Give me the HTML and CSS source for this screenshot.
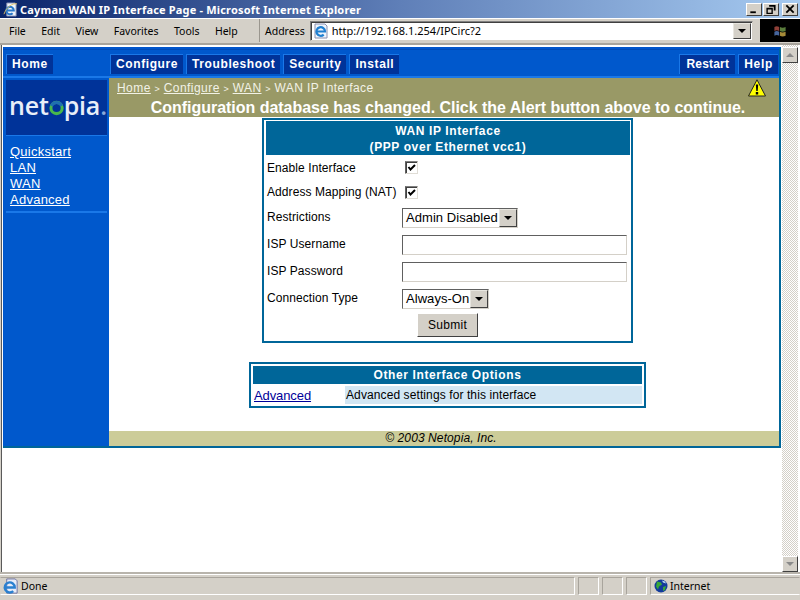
FILE: index.html
```html
<!DOCTYPE html>
<html lang="en">
<head>
<meta charset="utf-8">
<title>Cayman WAN IP Interface Page - Microsoft Internet Explorer</title>
<link rel="stylesheet" href="styles.css">
</head>
<body>
<div class="window">
  <header class="titlebar">
    <svg class="ti" viewBox="0 0 16 16"><path d="M4 1h9l1 1v13H4z" fill="#f0f4fb" stroke="#7c86ac"/><path d="M3.500 9h8a4 4 0 1 0-1.200 3" fill="none" stroke="#2a78c8" stroke-width="2.200"/><path d="M1 13C4 5 10 1 15 2" fill="none" stroke="#e3c060" stroke-width="1"/></svg>
    <span class="title-text">Cayman WAN IP Interface Page - Microsoft Internet Explorer</span>
    <div class="winbtns">
      <span class="winbtn"><svg viewBox="0 0 14 12"><path d="M3 8h6v2H3z"/></svg></span>
      <span class="winbtn"><svg viewBox="0 0 14 12"><path d="M5 1h7v6h-2V3H5zM2 4h7v7H2zM3.500 6v3.500h4V6z" fill-rule="evenodd"/></svg></span>
      <span class="winbtn"><svg viewBox="0 0 14 12"><path d="M3 1.500l8 8M11 1.500l-8 8" stroke="#000" stroke-width="2"/></svg></span>
    </div>
  </header>
  <div class="menubar">
    <nav class="menus">
      <span>File</span><span>Edit</span><span>View</span><span>Favorites</span><span>Tools</span><span>Help</span>
    </nav>
    <div class="address">
      <span class="addr-label">Address</span>
      <div class="addr-field">
        <svg class="addr-icon" viewBox="0 0 16 16"><path d="M2 1h10l2 2v12H2z" fill="#eef4fc" stroke="#8a90b0"/><path d="M3.500 8.500h8.500a4.300 4.300 0 1 0-1.300 3.100" fill="none" stroke="#1f7fd0" stroke-width="2.200"/></svg>
        <span class="addr-url">http://192.168.1.254/IPCirc?2</span>
        <span class="combo-btn addr-btn"><i class="arrow"></i></span>
      </div>
    </div>
    <div class="throbber"><svg viewBox="0 0 24 20"><path d="M5 5q3-2 6 0v5q-3-2-6 0z" fill="#8f4038"/><path d="M12 5q3 2 7 0v5q-4 2-7 0z" fill="#5a7d3c"/><path d="M5 11q3-2 6 0v5q-3-2-6 0z" fill="#46659c"/><path d="M12 11q3 2 7 0v5q-4 2-7 0z" fill="#a58a38"/></svg></div>
  </div>
  <div class="viewport">
    <main class="content">
      <div class="frame">
        <div class="topnav">
          <div class="nav-home"><a class="navbtn">Home</a></div>
          <div class="nav-main"><a class="navbtn">Configure</a><a class="navbtn">Troubleshoot</a><a class="navbtn">Security</a><a class="navbtn">Install</a></div>
          <div class="nav-right"><a class="navbtn">Restart</a><a class="navbtn">Help</a></div>
        </div>
        <div class="columns">
          <aside class="sidebar">
            <div class="logo"><span class="logo-text">net</span><svg class="logo-o" viewBox="0 0 18 18"><circle cx="9" cy="9" r="6.700" fill="none" stroke="#48b84c" stroke-width="3.600"/><path d="M2.800 6.500a6.700 6.700 0 0 1 12.400 0" fill="none" stroke="#1f6fb0" stroke-width="3.600"/></svg><span class="logo-text">pia</span><span class="logo-dot">.</span></div>
            <ul class="sidelinks">
              <li><a>Quickstart</a></li>
              <li><a>LAN</a></li>
              <li><a>WAN</a></li>
              <li><a>Advanced</a></li>
            </ul>
          </aside>
          <div class="body">
            <div class="alertbar">
              <div class="crumbs"><a>Home</a> <span class="sep">&gt;</span> <a>Configure</a> <span class="sep">&gt;</span> <a>WAN</a> <span class="sep">&gt;</span> WAN IP Interface</div>
              <svg class="warn" viewBox="0 0 18 18"><path d="M9 .800L17.500 17H.500z" fill="#ffff00" stroke="#222" stroke-linejoin="round"/><path d="M7.800 5.500h2.400l-.5 6.500H8.300zM7.800 13h2.400v2.400H7.800z" fill="#000"/></svg>
              <div class="alert-msg">Configuration database has changed. Click the Alert button above to continue.</div>
            </div>
            <div class="work">
              <form class="panel form-panel">
                <h1 class="panel-head">WAN IP Interface<br>(PPP over Ethernet vcc1)</h1>
                <div class="fields">
                  <label class="lbl">Enable Interface</label><div><input class="check" type="checkbox" checked></div>
                  <label class="lbl">Address Mapping (NAT)</label><div><input class="check" type="checkbox" checked></div>
                  <label class="lbl">Restrictions</label>
                  <div><span class="select"><span class="select-val">Admin Disabled</span><span class="combo-btn"><i class="arrow"></i></span></span></div>
                  <label class="lbl">ISP Username</label><div><input class="text" type="text"></div>
                  <label class="lbl">ISP Password</label><div><input class="text" type="password"></div>
                  <label class="lbl">Connection Type</label>
                  <div><span class="select"><span class="select-val">Always-On</span><span class="combo-btn"><i class="arrow"></i></span></span></div>
                </div>
                <div class="submit-row"><button class="submit" type="button">Submit</button></div>
              </form>
              <section class="panel other-panel">
                <h2 class="panel-head small">Other Interface Options</h2>
                <div class="other-row"><a class="other-link">Advanced</a><span class="other-desc">Advanced settings for this interface</span></div>
              </section>
            </div>
            <footer class="pagefoot">© 2003 Netopia, Inc.</footer>
          </div>
        </div>
      </div>
    </main>
    <div class="scrollbar">
      <span class="sb-btn"><i class="sb-up"></i></span>
      <span class="sb-btn"><i class="sb-down"></i></span>
    </div>
  </div>
  <footer class="statusbar">
    <div class="st-main"><svg class="st-ie" viewBox="0 0 18 18"><path d="M5 1h9l2 2v13H5z" fill="#e8ecf8" stroke="#6a70a0"/><path d="M3 10h10.500a5.300 5.300 0 1 0-1.600 3.800" fill="none" stroke="#2a80d0" stroke-width="2.500"/></svg><span>Done</span></div>
    <div class="st-cell"></div><div class="st-cell"></div><div class="st-cell"></div>
    <div class="st-zone"><svg class="globe" viewBox="0 0 14 14"><circle cx="7" cy="7" r="6.500" fill="#123a9c"/><path d="M3 2.500l4 1 1 2-3 2-1 3-2-3zM9 8l3-1-1 4-2 1z" fill="#38a838"/><path d="M8 1.500l3 1 1 2-3-1z" fill="#b8d8f0"/></svg><span>Internet</span></div>
  </footer>
</div>
</body>
</html>
```
FILE: styles.css
```css
* { box-sizing: border-box; }
html, body { margin: 0; padding: 0; background: #d4d0c8; }
body { font-family: "Liberation Sans", Arial, sans-serif; font-size: 12px; color: #000; overflow: hidden; }
a { cursor: pointer; }
.window { width: 800px; height: 600px; display: flex; flex-direction: column; overflow: hidden; }

.titlebar { height: 18px; flex: none; display: flex; align-items: center; background: linear-gradient(90deg, #0a246a 0%, #5f7fb8 50%, #a6caf0 100%); color: #fff; padding-left: 3px; }
.ti { width: 15px; height: 15px; margin-right: 2px; }
.title-text { font-family: "Noto Sans", Tahoma, sans-serif; font-weight: bold; font-size: 11px; letter-spacing: 0.18px; white-space: nowrap; }
.winbtns { margin-left: auto; display: flex; margin-right: 2px; margin-top: 1px; }
.winbtn { width: 16px; height: 13px; background: #d4d0c8; border: 1px solid; border-color: #fff #404040 #404040 #fff; display: flex; margin-left: 1px; }
.winbtn svg { width: 14px; height: 11px; }
.winbtn:nth-child(2) { margin-right: 2px; }

.menubar { height: 27px; flex: none; display: flex; align-items: center; background: #d4d0c8; border-top: 1px solid #fff; border-bottom: 2px solid #a8a49c; padding-bottom: 1px; }
.menus { display: flex; width: 260px; font-family: "Noto Sans", Tahoma, sans-serif; font-size: 10.5px; padding-left: 9px; gap: 15.4px; align-self: stretch; align-items: center; border-right: 1px solid #9a968e; }
.menus span { white-space: nowrap; }
.address { flex: 1; display: flex; align-items: center; padding-left: 5px; align-self: stretch; }
.addr-label { font-family: "Noto Sans", Tahoma, sans-serif; font-size: 10.5px; margin-right: 5px; }
.addr-field { width: 443px; height: 20px; display: flex; align-items: center; background: #fff; border: 1px solid; border-color: #808080 #d4d0c8 #d4d0c8 #808080; box-shadow: inset 1px 1px 0 #404040; padding-left: 2px; }
.addr-icon { width: 16px; height: 16px; margin-right: 3px; }
.addr-url { font-family: "Noto Sans", Tahoma, sans-serif; font-size: 11px; flex: 1; }
.addr-btn { height: 16px; margin-right: 1px; width: 17px; }
.throbber { width: 40px; height: 23px; background: #000; margin-left: auto; display: flex; align-items: center; justify-content: center; }
.throbber svg { width: 20px; height: 16px; }

.combo-btn { width: 18px; flex: none; display: inline-flex; align-items: center; justify-content: center; background: #d4d0c8; border: 1px solid; border-color: #e8e6e0 #404040 #404040 #e8e6e0; }
.arrow { width: 0; height: 0; border: 4px solid transparent; border-top-color: #000; border-bottom-width: 0; }

.viewport { flex: 1; display: flex; min-height: 0; background: #fff; border-bottom: 2px solid #b8b4ac; }
.content { width: 781px; margin-left: 1px; background: #fff; border-left: 1px solid #5a5a5a; box-shadow: -1px 0 0 #d4d0c8; padding: 2px 0 0 1px; }
.frame { width: 778px; height: 401px; display: flex; flex-direction: column; border-right: 2px solid #006699; border-bottom: 2px solid #006699; border-top: 2px solid #0055cc; background: #0055cc; }

.topnav { height: 29px; flex: none; display: flex; align-items: center; background: #0058cc; border-bottom: 2px solid #1a78e8; padding: 4px 1px 2px 3px; border-top: 1px solid #004bb8; }
.nav-home { width: 104px; }
.nav-main { display: flex; gap: 3px; }
.nav-right { margin-left: auto; display: flex; gap: 3px; }
.navbtn { display: inline-block; height: 20px; line-height: 19px; padding: 0 5px; background: #003399; color: #fff; font-weight: bold; font-size: 12px; letter-spacing: 0.6px; border-left: 1px solid #1a78e8; border-top: 1px solid #1a78e8; }
.nav-right .navbtn { letter-spacing: 0.2px; padding: 0 6px; }
.nav-right .navbtn:last-child { letter-spacing: 0.7px; padding: 0 5px; }

.columns { flex: 1; display: flex; min-height: 0; }
.sidebar { width: 106px; flex: none; background: #0058cc; padding: 2px 0 0 3px; }
.logo { width: 101px; height: 55px; background: #003399; display: flex; align-items: center; padding: 0 0 4px 3px; }
.logo-text { font-family: "Open Sans", "Liberation Sans", sans-serif; font-weight: 600; font-size: 25px; color: #e8eef8; letter-spacing: -0.2px; line-height: 1; }
.logo-dot { font-family: "Open Sans", "Liberation Sans", sans-serif; font-weight: 600; font-size: 25px; color: #8aa8d8; line-height: 1; }
.logo-o { width: 18px; height: 18px; margin: 4px 0 0; }
.sidelinks { list-style: none; margin: 0; padding: 8px 0 4px 4px; border-top: 1px solid #1a78e8; border-bottom: 2px solid #1a78e8; width: 101px; height: 78px; }
.sidelinks li { line-height: 16px; height: 16px; }
.sidelinks a { color: #fff; text-decoration: underline; font-size: 13px; letter-spacing: 0.25px; }

.body { flex: 1; display: flex; flex-direction: column; min-width: 0; background: #fff; }
.alertbar { height: 39px; flex: none; background: #999966; color: #fff; position: relative; padding-top: 3px; }
.crumbs { padding-left: 8px; font-size: 12px; letter-spacing: 0.45px; line-height: 15px; height: 18px; color: #f2f2e6; white-space: nowrap; }
.crumbs a { text-decoration: underline; }
.sep { font-size: 9px; letter-spacing: 0; }
.warn { position: absolute; right: 13px; top: 1px; width: 18px; height: 18px; }
.alert-msg { text-align: center; font-weight: bold; font-size: 16px; line-height: 18px; letter-spacing: -0.03px; color: #fff; white-space: nowrap; padding-left: 8px; }
.work { flex: 1; display: flex; flex-direction: column; align-items: center; min-height: 0; }
.panel { border: 2px solid #006699; background: #fff; }
.panel-head { margin: 0; background: #006699; color: #fff; text-align: center; font-weight: bold; font-size: 12px; letter-spacing: 0.6px; line-height: 16px; }
.form-panel { width: 371px; height: 225px; padding: 1px 1px 0 2px; margin-top: 1px; margin-left: 7px; }
.form-panel .panel-head { height: 34px; padding-top: 2px; }
.fields { display: grid; grid-template-columns: 135px 1fr; grid-template-rows: 25px 24px 26px 27px 28px 26px; padding-left: 1px; align-items: center; padding-top: 1px; }
.lbl { font-size: 12px; letter-spacing: 0.08px; white-space: nowrap; padding-bottom: 2px; }
.check { appearance: none; width: 13px; height: 13px; margin: 0 0 2px 3px; display: block; border: 1px solid; border-color: #808080 #e0ddd6 #e0ddd6 #606060; box-shadow: inset 1px 1px 0 #404040; background: #fff url("data:image/svg+xml,%3Csvg xmlns='http://www.w3.org/2000/svg' viewBox='0 0 11 11'%3E%3Cpath d='M2.500 5l2 2.500L9 3' fill='none' stroke='%23000' stroke-width='2'/%3E%3C/svg%3E") center/11px no-repeat; }
.select { display: inline-flex; height: 20px; align-items: stretch; background: #fff; border: 1px solid; border-color: #606060 #d4d0c8 #d4d0c8 #606060; vertical-align: middle; }
.select-val { font-size: 13px; padding: 0 1px 0 3px; line-height: 18px; letter-spacing: 0.05px; white-space: nowrap; }
.text { width: 225px; height: 20px; display: block; border: 1px solid; border-color: #606060 #d4d0c8 #d4d0c8 #606060; background: #fff; padding: 0; }
.submit-row { text-align: center; padding-right: 1px; margin-top: 1px; }
.submit { width: 61px; height: 24px; font-family: "Liberation Sans", Arial, sans-serif; font-size: 12px; letter-spacing: 0.3px; background: #d4d0c8; color: #000; border: 1px solid; border-color: #fff #404040 #404040 #fff; padding: 0; }
.other-panel { width: 397px; height: 46px; margin-top: 19px; margin-left: 7px; padding: 2px; }
.panel-head.small { height: 18px; letter-spacing: 0.6px; line-height: 18px; }
.other-row { display: flex; margin-top: 2px; height: 18px; align-items: center; }
.other-link { width: 92px; padding-left: 1px; color: #000099; text-decoration: underline; font-size: 13px; letter-spacing: -0.1px; }
.other-desc { flex: 1; background: #d2e6f3; line-height: 18px; height: 18px; font-size: 12px; letter-spacing: 0.1px; padding-left: 1px; }
.pagefoot { height: 15px; flex: none; background: #cccc99; text-align: center; font-style: italic; font-size: 12px; line-height: 15px; letter-spacing: 0.1px; padding-right: 6px; }

.scrollbar { width: 16px; display: flex; flex-direction: column; justify-content: space-between; padding-top: 2px; background: repeating-conic-gradient(#d4d0c8 0 25%, #fff 0 50%) 0 0 / 2px 2px; }
.sb-btn { width: 16px; height: 16px; background: #d4d0c8; border: 1px solid; border-color: #fff #404040 #404040 #fff; display: flex; align-items: center; justify-content: center; }
.sb-up { width: 0; height: 0; border: 4px solid transparent; border-bottom-color: #8a8a8a; border-top-width: 0; }
.sb-down { width: 0; height: 0; border: 4px solid transparent; border-top-color: #8a8a8a; border-bottom-width: 0; }

.statusbar { height: 26px; flex: none; display: flex; gap: 3px; background: #d4d0c8; border-top: 1px solid #fff; padding: 2px 0 5px; font-family: "Noto Sans", Tahoma, sans-serif; font-size: 10.5px; }
.st-main, .st-cell, .st-zone { border-style: solid; border-width: 1px; border-color: #a8a49c #fff #fff #a8a49c; }
.st-main { width: 575px; display: flex; align-items: center; padding-left: 1px; gap: 2px; border-left-color: transparent; }
.st-ie { width: 17px; height: 17px; }
.st-cell { width: 21px; }
.st-zone { flex: 1; display: flex; align-items: center; padding-left: 2px; gap: 2px; border-right-color: transparent; }
.globe { width: 14px; height: 14px; margin-left: 1px; }
```
